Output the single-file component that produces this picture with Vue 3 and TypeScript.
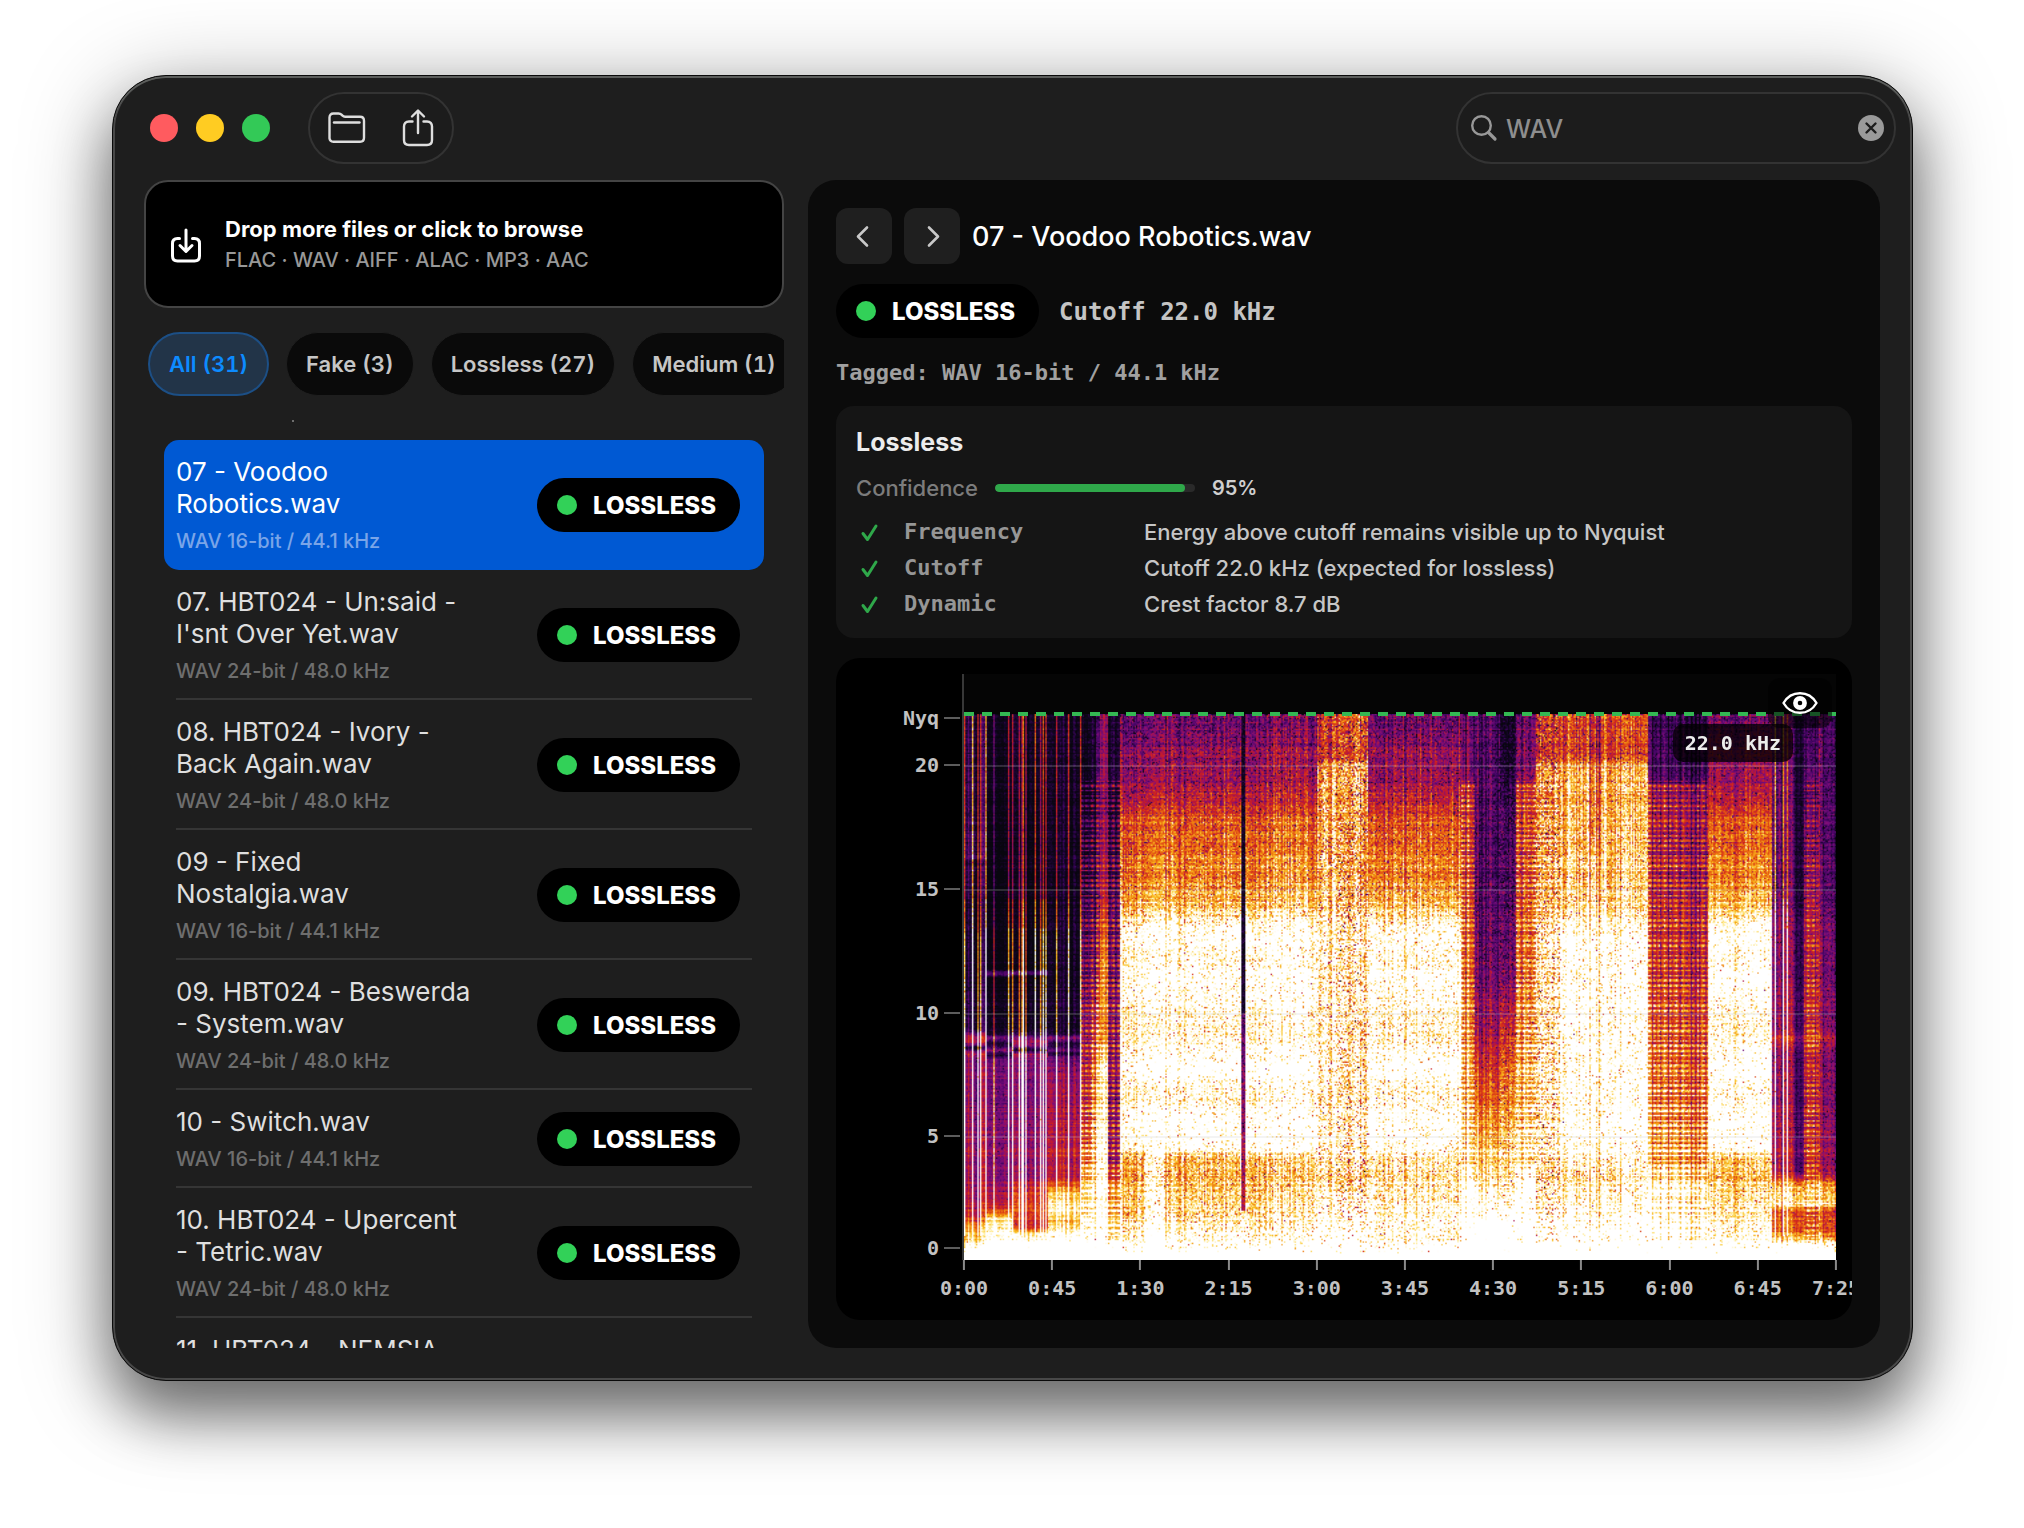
<script setup lang="ts">
import { onMounted, ref } from 'vue'

interface Track {
  lines: string[]
  format?: string
}

interface Segment {
  from: number
  to: number
  curve: [number, number][]
  column: number
  grain: number
  stripes?: number
  transients?: number
}

const query = ref('WAV')
const selected = ref(0)
const activeFilter = ref('All (31)')
const filters = ['All (31)', 'Fake (3)', 'Lossless (27)', 'Medium (1)']

const tracks: Track[] = [
  { lines: ['07 - Voodoo', 'Robotics.wav'], format: 'WAV 16-bit / 44.1 kHz' },
  { lines: ['07. HBT024 - Un:said -', "I'snt Over Yet.wav"], format: 'WAV 24-bit / 48.0 kHz' },
  { lines: ['08. HBT024 - Ivory -', 'Back Again.wav'], format: 'WAV 24-bit / 48.0 kHz' },
  { lines: ['09 - Fixed', 'Nostalgia.wav'], format: 'WAV 16-bit / 44.1 kHz' },
  { lines: ['09. HBT024 - Beswerda', '- System.wav'], format: 'WAV 24-bit / 48.0 kHz' },
  { lines: ['10 - Switch.wav'], format: 'WAV 16-bit / 44.1 kHz' },
  { lines: ['10. HBT024 - Upercent', '- Tetric.wav'], format: 'WAV 24-bit / 48.0 kHz' },
  { lines: ['11. HBT024 - NEMSIA'] },
]

const reasons = [
  { label: 'Frequency', text: 'Energy above cutoff remains visible up to Nyquist' },
  { label: 'Cutoff', text: 'Cutoff 22.0 kHz (expected for lossless)' },
  { label: 'Dynamic', text: 'Crest factor 8.7 dB' },
]

// Tick positions are percentages of the plot area.
const freqTicks = [
  { label: 'Nyq', at: 7.5, grid: false },
  { label: '20', at: 15.5, grid: true },
  { label: '15', at: 36.7, grid: true },
  { label: '10', at: 57.8, grid: true },
  { label: '5', at: 78.9, grid: true },
  { label: '0', at: 98, grid: false },
]
const duration = 445
const timeTicks = [0, 45, 90, 135, 180, 225, 270, 315, 360, 405, 445].map((s) => ({
  label: `${Math.floor(s / 60)}:${String(s % 60).padStart(2, '0')}`,
  at: (s / duration) * 100,
}))

const palette: [number, number, number, number][] = [
  [0, 8, 6, 14],
  [0.12, 22, 4, 42],
  [0.26, 66, 4, 100],
  [0.4, 124, 14, 124],
  [0.5, 176, 20, 70],
  [0.6, 208, 34, 28],
  [0.74, 236, 112, 16],
  [0.86, 250, 190, 30],
  [0.94, 255, 236, 150],
  [1, 255, 255, 255],
]

const loud: [number, number][] = [
  [0, 1.5], [0.6, 1.16], [1, 1.08], [1.6, 1.0], [3.4, 0.9], [4.3, 0.94], [4.6, 1.16], [5.6, 1.2], [6.8, 1.08], [7.8, 1.22],
  [9, 1.05], [10.5, 1.1], [11.6, 1.18], [12, 1.08], [13.2, 1.14], [13.8, 1.0], [14.2, 0.93], [15.5, 0.8], [17.9, 0.7],
  [18.1, 0.63], [18.9, 0.56], [19.2, 0.48], [20.6, 0.48], [20.9, 0.41], [22, 0.38],
]
const bright: [number, number][] = [
  [0, 1.5], [1, 1.2], [3.4, 1.02], [5, 1.1], [9, 1.06], [13, 1.08], [14, 0.98], [15, 0.94], [18, 0.88], [20, 0.86],
  [20.4, 0.64], [22, 0.68],
]
const spread: [number, number][] = [
  [0, 1.5], [1, 1.12], [3, 1.04], [4, 0.86], [8, 0.7], [11, 0.6], [14, 0.54], [19.1, 0.45], [19.4, 0.26], [22, 0.2],
]
const veil: [number, number][] = [
  [0, 1.5], [0.8, 1.0], [1.2, 0.7], [2, 0.7], [2.3, 0.98], [3, 0.88], [3.6, 0.52], [8.3, 0.44], [8.7, 0.5], [9, 0.6], [9.3, 0.46],
  [13, 0.42], [15, 0.36], [22, 0.32],
]

const segments: Segment[] = [
  {
    from: 0, to: 22, column: 0.1, grain: 0.04, transients: 0.42,
    curve: [[0, 1.5], [0.6, 1.04], [1.4, 0.8], [1.8, 0.62], [2.6, 0.52], [8.2, 0.44], [8.4, 0.56], [8.6, 0.1], [8.8, 0.56], [9.1, 0.5], [9.3, 0.2], [14, 0.12], [15.8, 0.24], [16, 0.1], [16.3, 0.3], [18, 0.22], [22, 0.22]],
  },
  {
    from: 22, to: 48, column: 0.05, grain: 0.04, transients: 0.14,
    curve: [[0, 1.5], [1, 1.04], [1.7, 0.92], [2.2, 0.58], [3.2, 0.44], [8.1, 0.38], [8.3, 0.12], [8.5, 0.45], [8.7, 0.1], [9, 0.36], [9.2, 0.1], [11.4, 0.02], [11.6, 0.34], [11.8, 0.02], [16, 0.02], [22, 0.08]],
  },
  {
    from: 48, to: 84, column: 0.06, grain: 0.04, transients: 0.4,
    curve: [[0, 1.5], [1, 1.02], [1.4, 0.6], [2, 0.7], [3, 0.62], [3.4, 0.48], [8.2, 0.42], [8.35, 0.5], [8.5, 0.14], [8.8, 0.54], [9.3, 0.12], [11.5, 0.06], [11.6, 0.36], [11.8, 0.04], [17, 0.06], [22, 0.14]],
  },
  {
    from: 84, to: 117, column: 0.07, grain: 0.04, transients: 0.16,
    curve: [[0, 1.5], [1, 1.08], [1.6, 0.84], [2, 1.0], [2.6, 0.92], [3.4, 0.56], [7, 0.48], [8.2, 0.36], [8.35, 0.12], [8.5, 0.34], [8.7, 0.1], [9, 0.4], [9.2, 0.1], [14, 0.08], [22, 0.1]],
  },
  {
    from: 117, to: 128, column: 0.05, grain: 0.05, stripes: 0.3,
    curve: [[0, 1.5], [1, 1.1], [3, 0.9], [5, 0.66], [9, 0.44], [13, 0.26], [18, 0.12], [19, 0.06], [22, 0.06]],
  },
  {
    from: 128, to: 136, column: 0.14, grain: 0.06, stripes: 0.3,
    curve: [[0, 1.5], [1, 1.2], [7, 0.9], [9, 0.72], [12, 0.46], [15, 0.34], [18, 0.26], [22, 0.2]],
  },
  {
    from: 136, to: 144, column: 0.1, grain: 0.05, stripes: 0.1,
    curve: [[0, 1.5], [1, 1.2], [8, 1.08], [9, 0.86], [12, 0.86], [15, 0.62], [18, 0.5], [22, 0.5]],
  },
  {
    from: 144, to: 155, column: 0.08, grain: 0.05, stripes: 0.3,
    curve: [[0, 1.5], [1, 1.0], [3, 0.8], [4, 0.5], [8, 0.46], [12, 0.4], [18, 0.2], [22, 0.14]],
  },
  { from: 155, to: 180, column: 0.09, grain: 0.09, curve: loud },
  { from: 180, to: 200, column: 0.06, grain: 0.08, curve: loud.map(([f, v]) => [f, f < 4.4 ? v + 0.14 : v]) },
  { from: 200, to: 345, column: 0.09, grain: 0.09, curve: loud },
  { from: 345, to: 353, column: 0.14, grain: 0.09, curve: loud.map(([f, v]) => [f, f < 4.4 ? v + 0.1 : v + 0.02]) },
  { from: 353, to: 374, column: 0.12, grain: 0.12, curve: bright },
  { from: 374, to: 403, column: 0.1, grain: 0.15, curve: bright.map(([f, v]) => [f, f > 1 && f < 19 ? v - 0.08 : v]) },
  { from: 403, to: 497, column: 0.1, grain: 0.09, curve: loud.map(([f, v]) => [f, f > 1 && f < 4.4 ? v + 0.1 : v]) },
  { from: 497, to: 510, column: 0.1, grain: 0.06, stripes: 0.26, curve: spread.map(([f, v]) => [f, v + 0.1]) },
  {
    from: 510, to: 535, column: 0.1, grain: 0.07,
    curve: [[0, 1.5], [1, 1.3], [3, 1.02], [5, 0.86], [7, 0.7], [9, 0.5], [11, 0.4], [13, 0.34], [16, 0.3], [22, 0.3]],
  },
  {
    from: 535, to: 552, column: 0.06, grain: 0.1,
    curve: [[0, 1.5], [1, 1.3], [3, 1.02], [6, 0.84], [9, 0.62], [11, 0.42], [13, 0.32], [18, 0.26], [19.6, 0.14], [22, 0.08]],
  },
  { from: 552, to: 572, column: 0.12, grain: 0.08, stripes: 0.24, curve: spread.map(([f, v]) => [f, v + 0.12]) },
  { from: 572, to: 595, column: 0.09, grain: 0.14, stripes: 0.08, curve: bright.map(([f, v]) => [f, f > 1 ? v - 0.07 : v]) },
  { from: 595, to: 624, column: 0.1, grain: 0.09, curve: bright.map(([f, v]) => [f, f > 4 && f < 14 ? v + 0.08 : v]) },
  { from: 624, to: 637, column: 0.16, grain: 0.09, curve: bright.map(([f, v]) => [f, f > 4 && f < 14 ? v + 0.08 : f > 15 ? v - 0.12 : v]) },
  { from: 637, to: 684, column: 0.1, grain: 0.09, curve: bright.map(([f, v]) => [f, f > 4 && f < 14 ? v + 0.08 : v]) },
  { from: 684, to: 744, column: 0.13, grain: 0.06, stripes: 0.24, curve: spread },
  { from: 744, to: 808, column: 0.08, grain: 0.08, curve: loud.map(([f, v]) => [f, f > 1 && f < 4.4 ? v + 0.02 : v]) },
  { from: 808, to: 830, column: 0.1, grain: 0.06, transients: 0.3, curve: veil },
  { from: 830, to: 840, column: 0.08, grain: 0.05, curve: veil.map(([f, v]) => [f, f > 3 ? v - 0.18 : v]) },
  { from: 840, to: 854, column: 0.08, grain: 0.06, stripes: 0.2, curve: veil.map(([f, v]) => [f, f > 3.4 ? (f < 19 ? v + 0.12 : v - 0.1) : v]) },
  { from: 854, to: 872, column: 0.14, grain: 0.07, transients: 0.08, curve: veil },
]

const canvas = ref<HTMLCanvasElement | null>(null)

function sample(curve: [number, number][], f: number): number {
  for (let i = 1; i < curve.length; i++) {
    const [f1, v1] = curve[i]
    if (f <= f1) {
      const [f0, v0] = curve[i - 1]
      return v0 + ((v1 - v0) * (f - f0)) / (f1 - f0)
    }
  }
  return curve[curve.length - 1][1]
}

function shade(v: number): [number, number, number] {
  if (v <= 0) return [palette[0][1], palette[0][2], palette[0][3]]
  for (let i = 1; i < palette.length; i++) {
    const b = palette[i]
    if (v <= b[0]) {
      const a = palette[i - 1]
      const k = (v - a[0]) / (b[0] - a[0])
      return [a[1] + (b[1] - a[1]) * k, a[2] + (b[2] - a[2]) * k, a[3] + (b[3] - a[3]) * k]
    }
  }
  return [255, 255, 255]
}

onMounted(() => {
  const el = canvas.value
  const ctx = el?.getContext('2d')
  if (!el || !ctx) return

  let seed = 20240607
  const rnd = (): number => {
    seed = (seed + 0x6d2b79f5) | 0
    let t = Math.imul(seed ^ (seed >>> 15), 1 | seed)
    t = (t + Math.imul(t ^ (t >>> 7), 61 | t)) ^ t
    return ((t ^ (t >>> 14)) >>> 0) / 4294967296
  }

  const w = el.width
  const h = el.height
  const image = ctx.createImageData(w, h)
  const rowNoise = Array.from({ length: h }, () => (rnd() - 0.5) * 0.12)

  for (let x = 0; x < w; x++) {
    const px = (x / w) * 872
    const seg = segments.find((s) => px >= s.from && px < s.to) ?? segments[segments.length - 1]
    const column = (rnd() + rnd() - 1) * seg.column * 1.8
    const hit = seg.transients && rnd() < seg.transients ? 0.26 + rnd() * 0.22 : 0
    const beat = Math.sin(px * 1.15) > 0.1
    const gap = px >= 277 && px < 281

    for (let y = 0; y < h; y++) {
      const f = 22.05 * (1 - y / h)
      let v = sample(seg.curve, f) + column + rowNoise[y]
      if (hit && f > 1) v += f < 13.4 ? hit * 1.9 : f < 14.6 ? hit * 1.5 : hit * 1.15
      if (seg.stripes) {
        const on = Math.floor((y / h) * 546) % 5 < 2
        if (on && f < 19.4) v += seg.stripes * (beat ? 1 : 0.4)
        else if (f < 19.4) v -= 0.06
      }
      if (gap && f > 2) v = f > 10 ? 0.1 : 0.2 + (10 - f) * 0.03 + rnd() * 0.2
      v += (rnd() - 0.5) * seg.grain * 2 + Math.log(rnd() + 0.0001) * seg.grain + seg.grain * 0.8
      if (f < 0.3) v = 1.4
      const [r, g, b] = shade(v)
      const i = (y * w + x) * 4
      image.data[i] = r
      image.data[i + 1] = g
      image.data[i + 2] = b
      image.data[i + 3] = 255
    }
  }
  ctx.putImageData(image, 0, 0)
})
</script>

<template>
  <main class="desktop">
    <div class="window">
      <header class="toolbar">
        <div class="lights">
          <button class="light red" aria-label="Close"></button>
          <button class="light yellow" aria-label="Minimize"></button>
          <button class="light green" aria-label="Zoom"></button>
        </div>
        <div class="actions">
          <button class="action" aria-label="Open folder">
            <svg width="40" height="40" viewBox="0 0 40 40" fill="none" stroke="#dedede" stroke-width="2.4" stroke-linecap="round" stroke-linejoin="round">
              <path d="M2.5 30.5V9.500q0-4 4-4h5q1.800 0 3 1.200l1 1q1 1 2.600 1H33q4 0 4 4v17q0 4-4 4H6.500q-4 0-4-4z" />
              <path d="M7 14.500h25.500" />
            </svg>
          </button>
          <button class="action" aria-label="Share">
            <svg width="40" height="40" viewBox="0 0 40 40" fill="none" stroke="#dedede" stroke-width="2.4" stroke-linecap="round" stroke-linejoin="round">
              <path d="M14.500 13.500H11q-5 0-5 5V32q0 5 5 5h18q5 0 5-5V18.500q0-5-5-5h-3.500" />
              <path d="M20 25V3M14 8.500l6-6 6 6" />
            </svg>
          </button>
        </div>
        <label class="search">
          <svg width="28" height="28" viewBox="0 0 28 28" fill="none" stroke="#989898" stroke-linecap="round" aria-hidden="true">
            <circle cx="11.5" cy="11.5" r="9.3" stroke-width="2.4" />
            <path d="M18.500 18.500l6.500 6.500" stroke-width="3.2" />
          </svg>
          <input v-model="query" type="text" aria-label="Search files" />
          <button class="clear" aria-label="Clear search" @click="query = ''">
            <svg width="26" height="26" viewBox="0 0 26 26" aria-hidden="true">
              <circle cx="13" cy="13" r="13" fill="#9a9a9a" />
              <path d="M8.500 8.500l9 9m0-9l-9 9" stroke="#1c1c1c" stroke-width="2.4" stroke-linecap="round" />
            </svg>
          </button>
        </label>
      </header>

      <div class="body">
        <aside class="sidebar">
          <button class="drop">
            <svg width="32" height="36" viewBox="0 0 32 36" fill="none" stroke="#fff" stroke-width="3" stroke-linecap="round" stroke-linejoin="round" aria-hidden="true">
              <path d="M9.500 10.500H7.500q-5 0-5 5V28q0 5 5 5h17q5 0 5-5V15.500q0-5-5-5h-2" />
              <path d="M16 2v21M10 17.500l6 6 6-6" />
            </svg>
            <span class="drop-text">
              <strong>Drop more files or click to browse</strong>
              <small>FLAC · WAV · AIFF · ALAC · MP3 · AAC</small>
            </span>
          </button>

          <div class="chips">
            <button
              v-for="f in filters"
              :key="f"
              class="chip"
              :class="{ active: f === activeFilter }"
              :aria-pressed="f === activeFilter"
              @click="activeFilter = f"
            >{{ f }}</button>
          </div>

          <ul class="list">
            <li v-for="(t, i) in tracks" :key="i">
              <button class="row" :class="{ selected: i === selected }" @click="selected = i">
                <span class="info">
                  <span v-for="line in t.lines" :key="line" class="name">{{ line }}</span>
                  <span v-if="t.format" class="format">{{ t.format }}</span>
                </span>
                <span v-if="t.format" class="badge"><i class="dot"></i>LOSSLESS</span>
              </button>
            </li>
          </ul>
        </aside>

        <section class="panel">
          <div class="heading">
            <button class="nav" aria-label="Previous file">
              <svg width="24" height="24" viewBox="0 0 24 24" fill="none" stroke="#c8c8c8" stroke-width="2.6" stroke-linecap="round" stroke-linejoin="round"><path d="M15 3.500l-9 9 9 9" /></svg>
            </button>
            <button class="nav" aria-label="Next file">
              <svg width="24" height="24" viewBox="0 0 24 24" fill="none" stroke="#c8c8c8" stroke-width="2.6" stroke-linecap="round" stroke-linejoin="round"><path d="M9 3.500l9 9-9 9" /></svg>
            </button>
            <h1>07 - Voodoo Robotics.wav</h1>
          </div>
          <div class="verdict">
            <span class="badge"><i class="dot"></i>LOSSLESS</span>
            <span class="cutoff">Cutoff 22.0 kHz</span>
          </div>
          <p class="tagged">Tagged: WAV 16-bit / 44.1 kHz</p>

          <div class="card">
            <h2>Lossless</h2>
            <div class="confidence">
              <label for="confidence">Confidence</label>
              <progress id="confidence" max="100" value="95"></progress>
              <b>95%</b>
            </div>
            <table class="reasons">
              <tbody>
                <tr v-for="r in reasons" :key="r.label">
                  <td class="tick">
                    <svg width="20" height="20" viewBox="0 0 20 20" fill="none" stroke="#2fa84a" stroke-width="3" stroke-linecap="round" stroke-linejoin="round" aria-hidden="true"><path d="M3 11.500l4.500 6L16 4" /></svg>
                  </td>
                  <th scope="row">{{ r.label }}</th>
                  <td>{{ r.text }}</td>
                </tr>
              </tbody>
            </table>
          </div>

          <figure class="chart">
            <div class="y-axis">
              <span v-for="t in freqTicks" :key="t.label" class="y-tick" :style="{ top: t.at + '%' }">{{ t.label }}</span>
            </div>
            <div class="plot">
              <canvas ref="canvas" width="654" height="410"></canvas>
              <template v-for="t in freqTicks" :key="t.label">
                <i v-if="t.grid" class="grid-line" :style="{ top: t.at + '%' }"></i>
              </template>
              <i class="cutoff-line"></i>
              <span class="cutoff-tag">22.0 kHz</span>
              <button class="eye" aria-label="Toggle cutoff line">
                <svg width="36" height="24" viewBox="0 0 36 24" fill="none" stroke="#fff" aria-hidden="true">
                  <path d="M1.500 12C5 6 11 2.200 18 2.200S31 6 34.500 12C31 18 25 21.800 18 21.800S5 18 1.500 12z" stroke-width="2.4" stroke-linejoin="round" />
                  <circle cx="18" cy="12" r="4.6" stroke-width="4.6" />
                </svg>
              </button>
            </div>
            <div class="x-axis">
              <span v-for="t in timeTicks" :key="t.label" class="x-tick" :style="{ left: t.at + '%' }">{{ t.label }}</span>
            </div>
          </figure>
        </section>
      </div>
    </div>
  </main>
</template>

<style>
body {
  background: #fff;
}
</style>

<style scoped>
* {
  box-sizing: border-box;
}
button {
  border: 0;
  padding: 0;
  background: none;
  color: inherit;
  font: inherit;
  text-align: left;
}
.desktop {
  padding: 75px 111px 147px 112px;
  overflow: hidden;
  font-family: Inter, "Liberation Sans", sans-serif;
  color: #fff;
}
.window {
  padding: 0 32px 32px 31px;
  border: 1px solid #0a0a0a;
  border-radius: 54px;
  background: #1e1e1e;
  box-shadow:
    inset 0 2px 0 #5c5e5c,
    inset 0 0 0 2px #484848,
    0 36px 56px rgba(0, 0, 0, 0.44),
    0 14px 90px rgba(0, 0, 0, 0.34);
}
.toolbar {
  display: flex;
  align-items: center;
  height: 104px;
  padding-left: 6px;
  margin-right: -16px;
}
.lights {
  display: flex;
  gap: 18px;
}
.light {
  width: 28px;
  height: 28px;
  border-radius: 50%;
}
.red { background: #ff5b5f; }
.yellow { background: #ffcc22; }
.green { background: #33c957; }
.actions,
.search {
  display: flex;
  align-items: center;
  height: 72px;
  border: 2px solid #333;
  border-radius: 36px;
  background: #1c1c1c;
}
.actions {
  gap: 31px;
  margin-left: 38px;
  padding: 0 14px 0 17px;
}
.action,
.clear,
.action svg,
.clear svg {
  display: block;
}
.search {
  width: 440px;
  margin-left: auto;
  padding: 0 10px 0 12px;
}
.search input {
  flex: 1;
  min-width: 0;
  margin-left: 8px;
  padding: 2px 0 0;
  border: 0;
  outline: 0;
  background: none;
  color: #8e8e8e;
  font: 500 25px Inter, "Liberation Sans", sans-serif;
}
.body {
  display: grid;
  grid-template-columns: 640px minmax(0, 1fr);
  gap: 24px;
}
.sidebar {
  display: flex;
  flex-direction: column;
  min-width: 0;
}
.drop {
  display: flex;
  align-items: center;
  gap: 23px;
  height: 128px;
  padding: 0 24px;
  border: 2px solid #444;
  border-radius: 24px;
  background: #000;
}
.drop svg {
  margin-top: 4px;
}
.drop-text {
  display: flex;
  flex-direction: column;
  gap: 4px;
}
.drop strong {
  font-size: 22px;
  font-weight: 700;
  line-height: 28px;
}
.drop small {
  color: #989898;
  font-size: 20px;
  font-weight: 500;
  line-height: 26px;
}
.chips {
  display: flex;
  gap: 17px;
  margin-top: 24px;
  padding-left: 4px;
  overflow: hidden;
  font-variant-numeric: tabular-nums;
}
.chip {
  flex: none;
  height: 64px;
  padding: 0 19px;
  border: 1px solid #1e1e1e;
  border-radius: 32px;
  background: #0a0a0a;
  color: #c6c6c6;
  font-size: 22px;
  font-weight: 600;
}
.chip.active {
  border: 2px solid #1c4f86;
  background: #223448;
  color: #0d8bff;
}
.list {
  position: relative;
  flex: 1;
  contain: size;
  margin: 24px 0 0;
  padding: 20px 20px 0;
  overflow: hidden;
  list-style: none;
}
.list::before {
  position: absolute;
  top: 0;
  left: 148px;
  width: 2px;
  height: 2px;
  background: #6e6e6e;
  content: "";
}
.row {
  position: relative;
  display: flex;
  align-items: center;
  justify-content: space-between;
  width: 100%;
  padding: 16px 24px 16px 12px;
  color: #dfdfdf;
}
.row::after {
  position: absolute;
  right: 12px;
  bottom: 0;
  left: 12px;
  height: 2px;
  background: #353535;
  content: "";
}
.row.selected {
  border-radius: 15px;
  background: #0059d3;
  color: #fff;
}
.row.selected::after {
  display: none;
}
.info,
.name,
.format {
  display: block;
}
.name {
  font-size: 26px;
  line-height: 32px;
}
.format {
  margin-top: 8px;
  color: #6e6e6e;
  font-size: 20px;
  font-weight: 500;
  line-height: 26px;
}
.selected .format {
  color: #7aa5e8;
}
.badge {
  display: flex;
  align-items: center;
  gap: 16px;
  width: 203px;
  height: 54px;
  padding-left: 20px;
  border-radius: 27px;
  background: #000;
  color: #fff;
  font-size: 24px;
  font-weight: 800;
}
.dot {
  width: 20px;
  height: 20px;
  border-radius: 50%;
  background: #32d158;
}
.panel {
  padding: 28px;
  border-radius: 28px;
  background: #0b0b0b;
}
.heading {
  display: flex;
  align-items: center;
  gap: 12px;
}
.nav {
  display: flex;
  align-items: center;
  justify-content: center;
  width: 56px;
  height: 56px;
  border-radius: 12px;
  background: #1f1f1f;
}
h1,
h2,
p {
  margin: 0;
}
h1 {
  padding-top: 2px;
  font-size: 27px;
  font-weight: 500;
  line-height: 36px;
}
.verdict {
  display: flex;
  align-items: center;
  gap: 20px;
  margin-top: 20px;
}
.cutoff,
.tagged,
.reasons th,
.chart {
  font-family: "DejaVu Sans Mono", "Liberation Mono", monospace;
  font-weight: 700;
}
.cutoff {
  padding-top: 2px;
  color: #c4c4c4;
  font-size: 24px;
}
.tagged {
  margin-top: 21px;
  color: #a0a0a0;
  font-size: 22px;
  line-height: 28px;
}
.card {
  height: 232px;
  margin-top: 19px;
  padding: 20px;
  border-radius: 18px;
  background: #151515;
}
h2 {
  color: #ececec;
  font-size: 25px;
  font-weight: 700;
  line-height: 32px;
}
.confidence {
  display: flex;
  align-items: center;
  gap: 17px;
  margin-top: 16px;
  font-size: 22px;
  line-height: 28px;
}
.confidence label {
  color: #7c7c7c;
  font-weight: 500;
}
.confidence b {
  color: #cfcfcf;
  font-size: 20px;
  font-weight: 600;
}
progress {
  width: 200px;
  height: 8px;
  border: 0;
  border-radius: 4px;
  overflow: hidden;
  background: #2a2a2a;
  appearance: none;
}
progress::-webkit-progress-bar {
  background: #2a2a2a;
}
progress::-webkit-progress-value {
  border-radius: 4px;
  background: #2fa84a;
}
.reasons {
  margin-top: 12px;
  border-collapse: collapse;
  color: #c6c6c6;
  font-size: 22px;
  line-height: 36px;
}
.reasons th {
  width: 240px;
  padding: 0;
  color: #969696;
  text-align: left;
}
.reasons td {
  padding: 0;
  font-weight: 500;
}
.reasons .tick {
  width: 48px;
  padding-left: 4px;
}
.tick svg {
  display: block;
}
.chart {
  display: grid;
  grid-template-columns: 128px minmax(0, 1fr) 16px;
  grid-template-rows: 586px 60px;
  margin: 20px 0 0;
  padding-top: 16px;
  border-radius: 24px;
  overflow: hidden;
  background: #000;
  color: #c2c2c2;
  font-size: 20px;
  line-height: 24px;
}
.y-axis {
  position: relative;
  border-right: 2px solid #383838;
}
.y-tick {
  position: absolute;
  right: 23px;
  transform: translateY(-50%);
}
.y-tick::after {
  position: absolute;
  top: 11px;
  right: -21px;
  width: 16px;
  height: 2px;
  background: #5c5c5c;
  content: "";
}
.plot {
  position: relative;
  padding-top: 40px;
  background: #050505;
}
.plot canvas {
  display: block;
  width: 100%;
  height: 546px;
}
.grid-line {
  position: absolute;
  right: 0;
  left: 0;
  height: 2px;
  background: rgba(200, 200, 200, 0.2);
}
.cutoff-line {
  position: absolute;
  top: 38px;
  right: 0;
  left: 0;
  height: 4px;
  background: repeating-linear-gradient(90deg, #34b853 0 10px, transparent 10px 18px);
}
.cutoff-tag {
  position: absolute;
  top: 50px;
  right: 43px;
  padding: 7px 12px;
  border-radius: 10px;
  background: rgba(0, 0, 0, 0.76);
  color: #ececec;
}
.eye {
  position: absolute;
  top: 4px;
  right: 4px;
  display: flex;
  align-items: center;
  justify-content: center;
  width: 64px;
  height: 50px;
  border-radius: 12px;
  background: rgba(0, 0, 0, 0.55);
}
.x-axis {
  position: relative;
  grid-column: 2;
}
.x-tick {
  position: absolute;
  top: 16px;
  transform: translateX(-50%);
}
.x-tick::before {
  position: absolute;
  top: -16px;
  left: 50%;
  width: 2px;
  height: 10px;
  margin-left: -1px;
  background: #8a8a8a;
  content: "";
}
</style>
